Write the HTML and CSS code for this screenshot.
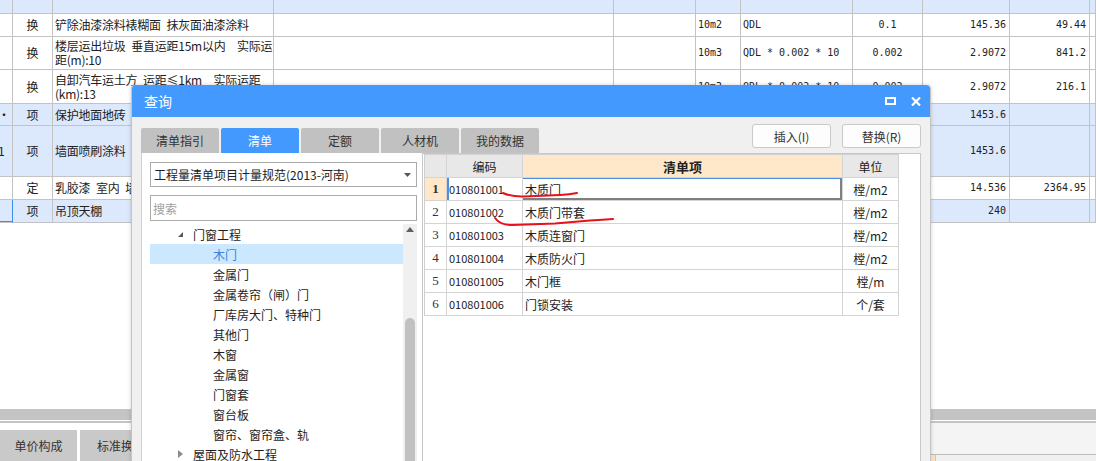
FILE: index.html
```html
<!DOCTYPE html>
<html lang="zh-CN">
<head>
<meta charset="utf-8">
<title>查询</title>
<link rel="stylesheet" href="styles.css">
</head>
<body>
<div class="app">
  <div class="sheet">
    <div class="row blue h14">
      <div></div><div></div><div></div><div></div><div></div><div></div><div></div><div></div><div></div><div></div><div></div>
    </div>
    <div class="row h23">
      <div></div><div class="ctr"><span>换</span></div><div class="txt"><span>铲除油漆涂料裱糊面&ensp;抹灰面油漆涂料</span></div><div></div><div></div>
      <div class="num"><span>10m2</span></div><div class="num"><span>QDL</span></div><div class="num ctr"><span>0.1</span></div><div class="num rt"><span>145.36</span></div><div class="num rt"><span>49.44</span></div><div></div>
    </div>
    <div class="row h33">
      <div></div><div class="ctr"><span>换</span></div><div class="txt"><span>楼层运出垃圾&ensp;垂直运距15m以内&ensp;&ensp;实际运<br>距(m):10</span></div><div></div><div></div>
      <div class="num"><span>10m3</span></div><div class="num"><span>QDL * 0.002 * 10</span></div><div class="num ctr"><span>0.002</span></div><div class="num rt"><span>2.9072</span></div><div class="num rt"><span>841.2</span></div><div></div>
    </div>
    <div class="row h34">
      <div></div><div class="ctr"><span>换</span></div><div class="txt"><span>自卸汽车运土方&ensp;运距≤1km&ensp;&ensp;实际运距<br>(km):13</span></div><div></div><div></div>
      <div class="num"><span>10m3</span></div><div class="num"><span>QDL * 0.002 * 10</span></div><div class="num ctr"><span>0.002</span></div><div class="num rt"><span>2.9072</span></div><div class="num rt"><span>216.1</span></div><div></div>
    </div>
    <div class="row blue h22">
      <div class="cut"><span>·</span></div><div class="ctr"><span>项</span></div><div class="txt"><span>保护地面地砖</span></div><div></div><div></div>
      <div></div><div></div><div></div><div class="num rt"><span>1453.6</span></div><div></div><div></div>
    </div>
    <div class="row blue h51">
      <div class="cut"><span>1</span></div><div class="ctr"><span>项</span></div><div class="txt"><span>墙面喷刷涂料</span></div><div></div><div></div>
      <div></div><div></div><div></div><div class="num rt"><span>1453.6</span></div><div></div><div></div>
    </div>
    <div class="row h23">
      <div></div><div class="ctr"><span>定</span></div><div class="txt"><span>乳胶漆&ensp;室内&ensp;墙面&ensp;二遍</span></div><div></div><div></div>
      <div class="num"><span>100m2</span></div><div class="num"><span>QDL</span></div><div class="num ctr"><span>0.01</span></div><div class="num rt"><span>14.536</span></div><div class="num rt"><span>2364.95</span></div><div></div>
    </div>
    <div class="row blue h23">
      <div class="sel"></div><div class="ctr"><span>项</span></div><div class="txt"><span>吊顶天棚</span></div><div></div><div></div>
      <div></div><div></div><div></div><div class="num rt"><span>240</span></div><div></div><div></div>
    </div>
  </div>
  <div class="hscroll"></div>
  <div class="split"></div>
  <div class="bottom">
    <div class="btabs">
      <div class="btab">单价构成</div>
      <div class="btab wide">标准换算</div>
    </div>
    <div class="bright">
      <div class="bfill"></div>
      <div class="bhead"><span class="peach"></span></div>
    </div>
  </div>
</div>

<div class="dialog">
  <div class="dhead">
    <span class="dtitle">查询</span>
    <svg class="imax" width="11" height="8" viewBox="0 0 11 8"><rect x="1" y="1" width="9" height="6" fill="none" stroke="#fff" stroke-width="2"/></svg>
    <svg class="iclose" width="10" height="9" viewBox="0 0 10 9"><path d="M1 0.5 L9 8.5 M9 0.5 L1 8.5" stroke="#fff" stroke-width="2.2" fill="none"/></svg>
  </div>
  <div class="dbar">
    <div class="tabs">
      <div class="tab">清单指引</div>
      <div class="tab on">清单</div>
      <div class="tab">定额</div>
      <div class="tab">人材机</div>
      <div class="tab">我的数据</div>
    </div>
    <div class="btns">
      <div class="btn">插入(I)</div>
      <div class="btn">替换(R)</div>
    </div>
  </div>
  <div class="dbody">
    <div class="lpane">
      <div class="combo"><span>工程量清单项目计量规范(2013-河南)</span>
        <svg width="7" height="4" viewBox="0 0 7 4"><polygon points="0,0 7,0 3.5,4" fill="#555"/></svg>
      </div>
      <div class="search">搜索</div>
      <div class="tree">
        <div class="tlist">
          <div class="node l1"><svg width="5" height="5" viewBox="0 0 5 5"><polygon points="5,0 5,5 0,5" fill="#595959"/></svg><span>门窗工程</span></div>
          <div class="node l2 cur">木门</div>
          <div class="node l2">金属门</div>
          <div class="node l2">金属卷帘（闸）门</div>
          <div class="node l2">厂库房大门、特种门</div>
          <div class="node l2">其他门</div>
          <div class="node l2">木窗</div>
          <div class="node l2">金属窗</div>
          <div class="node l2">门窗套</div>
          <div class="node l2">窗台板</div>
          <div class="node l2">窗帘、窗帘盒、轨</div>
          <div class="node l1"><svg width="5" height="8" viewBox="0 0 5 8"><polygon points="0,0 5,4 0,8" fill="#8c8c8c"/></svg><span>屋面及防水工程</span></div>
        </div>
        <div class="vscroll">
          <svg class="up" width="8" height="5" viewBox="0 0 8 5"><polygon points="0,5 8,5 4,0" fill="#606060"/></svg>
          <div class="thumb"></div>
        </div>
      </div>
    </div>
    <div class="rpane">
      <div class="qt">
        <div class="qrow qh">
          <div class="rn"></div><div class="cc">编码</div><div class="nm hot">清单项</div><div class="un">单位</div>
        </div>
        <div class="qrow">
          <div class="rn act">1</div><div class="cc focus">010801001</div><div class="nm selc">木质门</div><div class="un">樘/m2</div>
        </div>
        <div class="qrow">
          <div class="rn">2</div><div class="cc">010801002</div><div class="nm">木质门带套</div><div class="un">樘/m2</div>
        </div>
        <div class="qrow">
          <div class="rn">3</div><div class="cc">010801003</div><div class="nm">木质连窗门</div><div class="un">樘/m2</div>
        </div>
        <div class="qrow">
          <div class="rn">4</div><div class="cc">010801004</div><div class="nm">木质防火门</div><div class="un">樘/m2</div>
        </div>
        <div class="qrow">
          <div class="rn">5</div><div class="cc">010801005</div><div class="nm">木门框</div><div class="un">樘/m</div>
        </div>
        <div class="qrow">
          <div class="rn">6</div><div class="cc">010801006</div><div class="nm">门锁安装</div><div class="un">个/套</div>
        </div>
      </div>
    </div>
  </div>
</div>

<svg class="marks" width="1096" height="461" viewBox="0 0 1096 461">
  <path d="M503 193 Q512 197 524 196.5 L560 195 Q570 194.5 577 193" stroke="#e8101a" stroke-width="2" fill="none" stroke-linecap="round"/>
  <path d="M495 218 Q500 225 512 225 L555 223.5 L590 220.5 Q603 219.5 613 219" stroke="#e8101a" stroke-width="2" fill="none" stroke-linecap="round"/>
</svg>
</body>
</html>
```

FILE: styles.css
```css
* { box-sizing: border-box; }
html, body { margin: 0; padding: 0; }
body {
  width: 1096px;
  height: 461px;
  overflow: hidden;
  position: relative;
  background: #fff;
  font-family: "Noto Sans CJK SC", "Noto Sans", sans-serif;
  font-size: 12px;
  color: #222;
}

/* ---------- background sheet ---------- */
.app { display: flex; flex-direction: column; height: 461px; }
.sheet { height: 409px; background: #fff; }
.row {
  display: grid;
  grid-template-columns: 13px 40px 221px 340px 82px 45px 112px 70px 87px 80px 1fr;
}
.row > div {
  border-right: 1px solid #c3c3c3;
  border-bottom: 1px solid #c3c3c3;
  display: flex;
  align-items: center;
  overflow: hidden;
  white-space: nowrap;
  line-height: 14px;
  padding: 0 2px;
}
.row > div > span { display: block; }
.row > .txt { letter-spacing: -0.25px; }
.blue { background: #dce8fc; }
.h14 { height: 14px; }
.h22 { height: 22px; }
.h23 { height: 23px; }
.h33 { height: 33px; }
.h34 { height: 34px; }
.h51 { height: 51px; }
.row > .ctr { justify-content: center; }
.row > .num { font-family: "DejaVu Sans Mono", "Liberation Mono", monospace; font-size: 10px; }
.row > .rt { justify-content: flex-end; padding-right: 3px; }
.row > .cut { padding: 0; }
.row > .cut span { margin-left: -2px; }
.row > .sel { border-right-color: #3d8ef0; box-shadow: inset 0 -1px 0 #3d8ef0; }

.hscroll { height: 11px; background: #c4c4c4; }
.split { height: 3px; border-top: 1px solid #fff; background: #c4c4c4; }
.bottom { height: 38px; display: flex; }
.btabs { width: 931px; background: #fff; padding-top: 7px; display: flex; gap: 3px; }
.btab {
  width: 77px; height: 31px; background: #c9c9c9; color: #333;
  display: flex; align-items: center; justify-content: center; font-size: 12px;
}
.btab.wide { width: 82px; }
.bright { flex: 1; display: flex; flex-direction: column; background: #f4f4f4; }
.bfill { height: 31px; }
.bhead { flex: 1; border-top: 1px solid #bdbdbd; background: #f0f0f0; display: flex; padding-left: 1px; }
.peach { width: 4px; background: #ffe3c0; border-right: 1px solid #c8c8c8; }

/* ---------- dialog ---------- */
.dialog {
  position: absolute;
  left: 131px;
  top: 85px;
  width: 800px;
  height: 400px;
  background: #f0f0f0;
  border: 1px solid #c4c4c4;
  border-top: none;
  border-radius: 4px 4px 0 0;
  box-shadow: 0 0 4px rgba(0, 0, 0, 0.18);
  display: flex;
  flex-direction: column;
}
.dhead {
  height: 32px;
  background: #4499ff;
  border-radius: 4px 4px 0 0;
  display: flex;
  align-items: center;
  padding: 0 9px 0 12px;
}
.dtitle { color: #fff; font-size: 14px; line-height: 1; }
.imax { margin-left: auto; }
.iclose { margin-left: 15px; }

.dbar { height: 36px; display: flex; padding: 0 9px; }
.tabs { display: flex; gap: 2px; align-self: flex-end; }
.tab {
  width: 78px; height: 25px; background: #c1c1c1; color: #333;
  border-radius: 2px 2px 0 0;
  display: flex; align-items: center; justify-content: center;
  font-size: 12px;
}
.tab.on { background: #4499ff; color: #fff; }
.btns { margin-left: auto; padding-top: 7px; display: flex; gap: 11px; align-self: flex-start; }
.btn {
  width: 79px; height: 24px; background: #fdfdfd; border: 1px solid #c9c9c9;
  border-radius: 3px; color: #333;
  display: flex; align-items: center; justify-content: center;
  font-size: 12px;
}

.dbody { flex: 1; display: flex; padding: 0 9px; min-height: 0; }
.lpane {
  width: 281px; background: #fff; border-left: 1px solid #d0d0d0;
  padding: 9px 5px 0 8px;
  display: flex; flex-direction: column;
}
.combo {
  height: 25px; border: 1px solid #ababab; background: #fff;
  display: flex; align-items: center; justify-content: space-between;
  padding: 0 5px 0 3px; color: #222;
}
.search {
  margin-top: 8px; height: 26px; border: 1px solid #ababab; background: #fff;
  display: flex; align-items: center; padding-left: 2px; color: #a0a0a0;
}
.tree { margin-top: 3px; flex: 1; display: flex; min-height: 0; }
.tlist { width: 253px; }
.node { height: 20px; display: flex; align-items: center; color: #1e1e1e; white-space: nowrap; }
.node.l1 { padding-left: 28px; }
.node.l1 span { margin-left: 10px; }
.node.l2 { padding-left: 63px; }
.node.cur { background: #cce8ff; color: #3c7fdc; }
.vscroll {
  width: 14px; background: #f0f0f0;
  display: flex; flex-direction: column; align-items: center;
}
.vscroll .up { margin-top: 3px; }
.thumb { margin-top: 86px; width: 10px; flex: 1; background: #c1c1c1; border-radius: 5px 5px 0 0; }

.rpane { flex: 1; background: #fff; border: 1px solid #c8c8c8; border-bottom: none; }
.qt { margin-left: 1px; width: 475px; border-left: 1px solid #d0d0d0; border-top: 1px solid #d0d0d0; }
.qrow { display: grid; grid-template-columns: 22px 76px 320px 56px; height: 23px; }
.qrow > div {
  border-right: 1px solid #d4d4d4; border-bottom: 1px solid #d4d4d4;
  display: flex; align-items: center; white-space: nowrap; overflow: hidden;
}
.qrow .rn { justify-content: center; font-family: "Liberation Serif", serif; font-size: 13px; color: #333; }
.qrow .cc { padding-left: 2px; font-size: 11px; color: #222; }
.qrow .nm { padding-left: 2px; }
.qrow .un { justify-content: center; }
.qh > div { background: #e8e8e8; justify-content: center; }
.qh .cc { font-size: 12px; padding-left: 0; }
.qh .nm.hot { background: #ffe8ca; font-weight: bold; font-size: 13px; padding-left: 0; }
.qrow .rn.act { background: #ffe7c8; font-weight: bold; }
.qrow .focus { box-shadow: inset 2px 0 0 #4a90e2; }
.qrow .selc { box-shadow: inset 0 1px 0 #4a90e2, inset -2px -2px 0 #7f7f7f; }

.marks { position: absolute; left: 0; top: 0; pointer-events: none; }
```
